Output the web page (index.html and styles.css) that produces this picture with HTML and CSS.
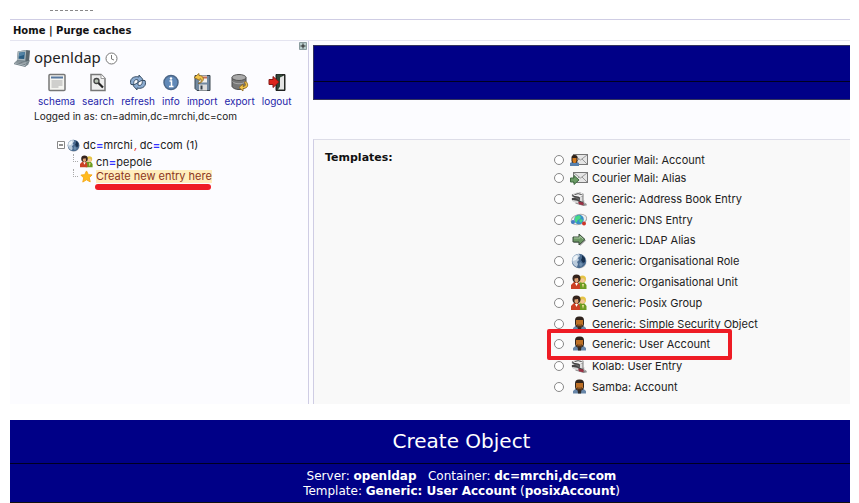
FILE: index.html
```
<!DOCTYPE html>
<html lang="en">

<head>
  <meta charset="UTF-8">
  <meta name="viewport" content="width=device-width, initial-scale=1.0">
  <title>phpLDAPadmin - Create Object</title>
  <link rel="stylesheet" href="styles.css">
</head>

<body>
  <svg class="sprite" aria-hidden="true">
    <symbol id="i-globe" viewBox="0 0 16 16">
      <circle cx="8.600" cy="8.600" r="7" fill="#aaa" opacity=".5"/>
      <circle cx="8" cy="8" r="7.200" fill="#4a6b90"/>
      <path d="M1 7C1 3 5 .8 8 1l1 2-2 2 1 2-2 2 1 2-1 3C3 13 1 10 1 7z" fill="#bacbdc"/>
      <path d="M2.500 4L6 2l1 2-2 3-3 1z" fill="#eef4f8"/>
      <path d="M11 2l3 3v4l-2 1-2-3 1-2z" fill="#17304f"/>
      <path d="M9 9l3 2-2 3-2-2z" fill="#6d8eae"/>
    </symbol>
    <symbol id="i-group" viewBox="0 0 16 16">
      <path d="M7 15V9l3-1h3l2.500 3v4z" fill="#6c9c22"/>
      <circle cx="11.500" cy="5" r="3.500" fill="#e5c447"/>
      <circle cx="11.500" cy="6.500" r="2.300" fill="#f2c697"/>
      <path d="M0 15v-4l3-3h4l2 3v4z" fill="#cc4125"/>
      <path d="M4 9l1.500 3L7 9z" fill="#fff"/>
      <circle cx="5.500" cy="4.500" r="4" fill="#34231c"/>
      <path d="M3.500 4.500L7 4l.5 3-2 2-2-2z" fill="#dda074"/>
      <path d="M11 10l1 4 1-4z" fill="#f4e4a0"/>
    </symbol>
    <symbol id="i-user" viewBox="0 0 16 16">
      <path d="M2 14.500V12l3-2.500h7l3 2.500v2.500z" fill="#6887a9"/>
      <path d="M6.500 10h4l-.5 4.500H7z" fill="#2d2927"/>
      <rect x="4" y=".5" width="9" height="11" rx="4" fill="#30241d"/>
      <path d="M5 4h7v4.500L10 11H7L5 8.500z" fill="#bd7026"/>
      <path d="M6 8.500h5l-1 3H7z" fill="#49301d"/>
      <path d="M7 9h3" stroke="#bd7026"/>
    </symbol>
    <symbol id="i-mail" viewBox="0 0 18 14">
      <rect x="3.500" y="1.500" width="14" height="10" fill="#e5e5e5" stroke="#777"/>
      <path d="M4 2l6.500 5L17 2M4 11l5-5m8 5l-5-5" fill="none" stroke="#999"/>
    </symbol>
    <symbol id="i-mail-user" viewBox="0 0 18 14">
      <use href="#i-mail" width="18" height="14"/>
      <path d="M0 13v-3l2-1h5l2 1v3z" fill="#5680ae"/>
      <rect x="1.500" y="2" width="6" height="8" rx="2.500" fill="#302319"/>
      <path d="M2.500 5h4v3l-1 2h-2l-1-2z" fill="#d47b1f"/>
    </symbol>
    <symbol id="i-mail-alias" viewBox="0 0 18 14">
      <use href="#i-mail" width="18" height="14"/>
      <path d="M.5 7H4V4.500L9 9l-5 4.500V11H.5z" fill="#6b9b66" stroke="#3e6a3f"/>
    </symbol>
    <symbol id="i-arrow" viewBox="0 0 16 16">
      <path d="M3 6h6V3l6 5.500L9 14v-3H3z" fill="#aaa"/>
      <path d="M2 5h6V2l6 5.500L8 13v-3H2z" fill="#6d9865" stroke="#3b4d3b"/>
      <path d="M3 6h6V4l3 3" fill="none" stroke="#a5c49e"/>
    </symbol>
    <symbol id="i-card" viewBox="0 0 18 18">
      <path d="M5 13l5-2 7 3 1 2-4 1-9-3z" fill="#888"/>
      <path d="M1 8l6-1 8 4-1 3-4 1-9-5z" fill="#444"/>
      <path d="M2 10l5 1 5 3-1 1-9-3z" fill="#d5d5d5"/>
      <path d="M1 4l8-3 5 2v9l-4-1-9-5z" fill="#666"/>
      <path d="M2 3.500L8 1l5 1.500v3L10 7 4 6z" fill="#eee"/>
      <path d="M4 4l4-1 4 1M3 6l6 1 1 3" fill="none" stroke="#333"/>
      <path d="M10 7l3-1v6l-3-1z" fill="#ddd"/>
      <path d="M8 12l6 1v3l-5-1z" fill="#9c2f43"/>
      <path d="M14 6v6l2 3" fill="none" stroke="#bbb"/>
    </symbol>
    <symbol id="i-dns" viewBox="0 0 18 16">
      <ellipse cx="9" cy="7.500" rx="8" ry="5" fill="#eee" stroke="#aaa" transform="rotate(-15 9 8)"/>
      <circle cx="9" cy="7.500" r="4.800" fill="#388fc8"/>
      <path d="M5 5l4-2 2 2-1 2-2 1-2 3-1-2zm6 2l2 1-2 3-2-2z" fill="#48d886"/>
      <circle cx="3" cy="10" r="2" fill="#447bc5"/>
      <circle cx="14" cy="11.500" r="2" fill="#cc3528"/>
    </symbol>
    <symbol id="i-computer" viewBox="0 0 18 19">
      <path d="M4 2l9-1.500 4 .5-1 11-4 2-9-1z" fill="#59666d"/>
      <path d="M4 2l9-1.500-1 11.500-9-.5z" fill="#a7b5bc"/>
      <path d="M5.500 3.500l6-1-.7 7.500-6-.2z" fill="#285c82"/>
      <path d="M5.500 3.500l6-1-.3 3-6 2z" fill="#5283a5"/>
      <path d="M3 12l11 1-2 5-12-3z" fill="#c1cbd0" stroke="#718087"/>
      <path d="M2 14l10 2M3 13l10 1.500" stroke="#6b777e"/>
      <path d="M12 18l2-5 3-2-2 5z" fill="#77858c"/>
    </symbol>
    <symbol id="i-clock" viewBox="0 0 13 13">
      <circle cx="6.500" cy="6.500" r="5.500" fill="#fff" stroke="#777"/>
      <path d="M6.500 3v4L9 8" fill="none" stroke="#777"/>
    </symbol>
    <symbol id="i-schema" viewBox="0 0 18 18">
      <rect x="1" y="1" width="16" height="16" rx="1" fill="#f4f4f0" stroke="#777" stroke-width="1.500"/>
      <path d="M3 4h12" stroke="#5879a0" stroke-width="2"/>
      <path d="M3.500 7.500h11m-11 2h11m-11 2h11m-11 2h7" stroke="#aaa"/>
    </symbol>
    <symbol id="i-search" viewBox="0 0 18 18">
      <path d="M2 1h10l4 4v12H2z" fill="#eee" stroke="#777" stroke-width="1.500"/>
      <path d="M12 1v4h4" fill="#fff" stroke="#999"/>
      <circle cx="7.500" cy="7.500" r="2.500" fill="#b7c2b4" stroke="#444" stroke-width="1.300"/>
      <path d="M9.500 9.500L14 14" stroke="#222" stroke-width="2.200"/>
    </symbol>
    <symbol id="i-refresh" viewBox="0 0 18 18">
      <g fill="#8cacd0" stroke="#3b5168" stroke-width="1">
        <path d="M2 11C0 6 4 2 10 3.500V1.500L14 6l-5 3V6.500C6 5 4 8 5 11z"/>
        <path d="M16 7c2 5-2 9-8 7.500v2L4 12l5-3v2.500c3 1.500 5-1.500 4-4.500z"/>
      </g>
    </symbol>
    <symbol id="i-info" viewBox="0 0 18 18">
      <circle cx="9" cy="9" r="7" fill="#6189b8" stroke="#4c6788" stroke-width="1.500"/>
      <path d="M7.500 7.500h2V13M7 13h4.500" fill="none" stroke="#fff" stroke-width="1.500"/>
      <circle cx="9" cy="5" r="1.200" fill="#fff"/>
    </symbol>
    <symbol id="i-import" viewBox="0 0 18 18">
      <path d="M2 2h15v15H4l-2-2z" fill="#7188a0" stroke="#3b4651"/>
      <path d="M6 2h8v7H6z" fill="#f5f2ee"/>
      <path d="M7 4h7" stroke="#c76d53" stroke-width="2"/>
      <path d="M6 11h8v6H6z" fill="#ddd"/>
      <path d="M7.500 12h2v4h-2z" fill="#35414c"/>
      <path d="M5 10C9 9 9 6 7 5v2L1 4l5-4v2c6 0 6 7-1 8z" fill="#f1c44b" stroke="#8a651d" stroke-width=".8"/>
    </symbol>
    <symbol id="i-export" viewBox="0 0 18 18">
      <path d="M1 4v9c2 4 12 4 14 0V4z" fill="#777" stroke="#4b4b4b"/>
      <ellipse cx="8" cy="4" rx="7" ry="3" fill="#aaa" stroke="#555"/>
      <path d="M1.500 8c2 3 11 3 13 0" fill="none" stroke="#aaa"/>
      <path d="M15 8c3 3 2 7-3 7v2.500L8 14l4-3.500V13c3 0 3-3 1-4z" fill="#f1c44b" stroke="#8a651d" stroke-width=".8"/>
    </symbol>
    <symbol id="i-logout" viewBox="0 0 18 18">
      <path d="M8 1h9v16H8z" fill="#263126" stroke="#222"/>
      <path d="M9 1h5v12l-5 4z" fill="#304737"/>
      <path d="M12 4l4-2v14h-6l2-3z" fill="#e4e4e4"/>
      <path d="M1 6h4V3l6 5.500L5 14v-3H1z" fill="#dd261c" stroke="#851b17"/>
    </symbol>
    <symbol id="i-star" viewBox="0 0 14 14">
      <path d="M7 1l2 4 4 .3-3 3 1 4.500-4-2.300L3 13l1-4.500-3-3L5 5z" fill="#ffbb20" stroke="#f5aa18"/>
    </symbol>
    <symbol id="i-minus" viewBox="0 0 8 8">
      <path d="M.5.500h7v7h-7z" fill="#fff" stroke="#888"/>
      <path d="M2 4h4" stroke="#222"/>
    </symbol>
    <symbol id="i-plus" viewBox="0 0 8 8">
      <path d="M.5.500h7v7h-7z" fill="#b8cccc" stroke="#8b9c9e"/>
      <path d="M1.500 4h5M4 1.500v5" stroke="#222"/>
    </symbol>
  </svg>

  <div class="page">
    <header class="top">
      <div class="logo-edge"></div>
      <nav class="menu"><a href="#">Home</a> | <a href="#">Purge caches</a></nav>
    </header>

    <div class="columns">
      <aside class="sidebar">
        <button class="expand" aria-label="Expand panel"><svg><use href="#i-plus"/></svg></button>
        <h1 class="server">
          <svg class="computer"><use href="#i-computer"/></svg>
          <span>openldap</span>
          <svg class="clock"><use href="#i-clock"/></svg>
        </h1>
        <nav class="tools">
          <a href="#"><svg><use href="#i-schema"/></svg>schema</a>
          <a href="#"><svg><use href="#i-search"/></svg>search</a>
          <a href="#"><svg><use href="#i-refresh"/></svg>refresh</a>
          <a href="#"><svg><use href="#i-info"/></svg>info</a>
          <a href="#"><svg><use href="#i-import"/></svg>import</a>
          <a href="#"><svg><use href="#i-export"/></svg>export</a>
          <a href="#"><svg><use href="#i-logout"/></svg>logout</a>
        </nav>
        <p class="logged">Logged in as: cn=admin,dc=mrchi,dc=com</p>

        <div class="tree">
          <div class="node">
            <button class="fold" aria-label="Collapse"><svg><use href="#i-minus"/></svg></button>
            <svg class="node-icon"><use href="#i-globe"/></svg>
            <a href="#">dc<b>=</b>mrchi<i>,</i>dc<b>=</b>com (1)</a>
          </div>
          <ul class="children">
            <li>
              <svg class="node-icon"><use href="#i-group"/></svg>
              <a href="#">cn<b>=</b>pepole</a>
            </li>
            <li>
              <svg class="node-icon"><use href="#i-star"/></svg>
              <a href="#" class="create">Create new entry here</a>
            </li>
          </ul>
        </div>
      </aside>

      <main class="content">
        <div class="banner banner-empty">
          <div class="title"></div>
          <div class="subtitle"></div>
        </div>
        <form class="templates">
          <h2>Templates:</h2>
          <div class="options">
            <label class="mail"><input type="radio" name="template"><svg><use href="#i-mail-user"/></svg>Courier Mail: Account</label>
            <label class="mail"><input type="radio" name="template"><svg><use href="#i-mail-alias"/></svg>Courier Mail: Alias</label>
            <label class="tall"><input type="radio" name="template"><svg><use href="#i-card"/></svg>Generic: Address Book Entry</label>
            <label><input type="radio" name="template"><svg><use href="#i-dns"/></svg>Generic: DNS Entry</label>
            <label><input type="radio" name="template"><svg><use href="#i-arrow"/></svg>Generic: LDAP Alias</label>
            <label class="medium"><input type="radio" name="template"><svg><use href="#i-globe"/></svg>Generic: Organisational Role</label>
            <label><input type="radio" name="template"><svg><use href="#i-group"/></svg>Generic: Organisational Unit</label>
            <label class="medium"><input type="radio" name="template"><svg><use href="#i-group"/></svg>Generic: Posix Group</label>
            <label><input type="radio" name="template"><svg><use href="#i-user"/></svg>Generic: Simple Security Object</label>
            <label class="marked"><input type="radio" name="template"><svg><use href="#i-user"/></svg>Generic: User Account</label>
            <label class="tall"><input type="radio" name="template"><svg><use href="#i-card"/></svg>Kolab: User Entry</label>
            <label><input type="radio" name="template"><svg><use href="#i-user"/></svg>Samba: Account</label>
          </div>
        </form>
      </main>
    </div>

    <section class="banner banner-object">
      <h2 class="title">Create Object</h2>
      <div class="subtitle">
        <p>Server: <b>openldap</b> &nbsp; Container: <b>dc=mrchi,dc=com</b></p>
        <p>Template: <b>Generic: User Account</b> (<b>posixAccount</b>)</p>
      </div>
    </section>
  </div>
</body>

</html>
```
FILE: styles.css
```
*,
*::before,
*::after {
  margin: 0;
  padding: 0;
  box-sizing: border-box;
}

body {
  font-family: "DejaVu Sans", Verdana, sans-serif;
  font-size: 11px;
  color: #222;
  background: #fff;
}

a {
  color: inherit;
  text-decoration: none;
}

button {
  border: none;
  background: none;
  display: flex;
}

svg {
  flex: none;
}

.sprite {
  display: none;
}

.page {
  padding: 10px 9px 0 10px;
}

.logo-edge {
  width: 43px;
  height: 9px;
  margin-left: 40px;
  border-top: 1px dashed #888;
}

.menu {
  height: 22px;
  padding-left: 3px;
  line-height: 21px;
  font-size: 10px;
  font-weight: bold;
  color: #111;
  border-top: 1px solid #cfcde4;
  border-bottom: 1px solid #e4e4f0;
}

.columns {
  display: flex;
  background: #fcfcff;
}

.sidebar {
  position: relative;
  flex: 0 0 35.600%;
  padding: 7px 0 0 4px;
  font-family: Inter, sans-serif;
  border-right: 1px solid #cfcde4;
}

.expand {
  position: absolute;
  top: 1px;
  right: 1px;
}

.expand svg {
  width: 8px;
  height: 8px;
}

.server {
  display: flex;
  align-items: center;
  height: 20px;
  font-family: "Noto Sans", sans-serif;
  font-size: 15px;
  font-weight: normal;
}

.server span {
  line-height: 16px;
  padding-bottom: 2px;
}

.computer {
  width: 17px;
  height: 19px;
  margin-right: 3px;
}

.clock {
  width: 13px;
  height: 13px;
  margin-left: 4px;
}

.tools {
  display: flex;
  gap: 7px;
  padding: 5px 0 0 24px;
  font-size: 10px;
  line-height: 18px;
  color: #2525a8;
}

.tools a {
  display: flex;
  flex-direction: column;
  align-items: center;
}

.tools svg {
  width: 18px;
  height: 19px;
}

.logged {
  padding-left: 20px;
  line-height: 12px;
  font-size: 10px;
}

.tree {
  padding: 14px 0 0 43px;
}

.tree b {
  color: #33f;
}

.tree i {
  margin: 0 2px;
  color: #e22;
}

.node,
.children li {
  display: flex;
  align-items: center;
  height: 18px;
}

.fold svg {
  width: 8px;
  height: 8px;
}

.node-icon {
  width: 13px;
  height: 13px;
  margin: 0 3px 0 2px;
}

.children {
  list-style: none;
  margin-left: 16px;
}

.children li {
  height: 15px;
}

.children li::before {
  content: "";
  align-self: flex-start;
  width: 5px;
  height: 8px;
  border-left: 1px dotted #aaa;
  border-bottom: 1px dotted #aaa;
}

.create {
  position: relative;
  line-height: 13px;
  color: #8c3520;
  background: #ffedbd;
}

.create::after {
  content: "";
  position: absolute;
  top: 14px;
  left: -1px;
  width: 100%;
  height: 6px;
  border-radius: 3px;
  background: #ee1c25;
}

.content {
  flex: 1;
  padding: 4px 0 0 4px;
}

.banner {
  color: #fff;
  background: #000087;
  text-align: center;
}

.banner-empty {
  margin-bottom: 39px;
  border: 1px solid #33335c;
  border-right: none;
}

.banner-empty .title {
  height: 35px;
}

.banner-empty .subtitle {
  height: 18px;
}

.subtitle {
  border-top: 1px solid #000020;
}

.templates {
  display: grid;
  grid-template-columns: 228px 1fr;
  padding: 11px 0 7px 11px;
  background: #f9f9f9;
  border-top: 1px solid #dddde8;
  border-left: 1px solid #cfcde4;
}

.templates h2 {
  font-size: 11px;
  line-height: 13px;
  color: #111;
}

.options {
  font-family: Inter, sans-serif;
}

.options label {
  position: relative;
  display: flex;
  align-items: center;
  height: 20px;
}

.options .mail {
  height: 18px;
}

.options .medium {
  height: 22px;
}

.options .tall {
  height: 23px;
}

.options input {
  appearance: none;
  width: 10px;
  height: 10px;
  margin: 0 6px 0 1px;
  border: 1px solid #888;
  border-radius: 50%;
  background: #fff;
}

.options svg {
  width: 18px;
  height: 16px;
  margin-right: 4px;
}

.options .marked::after {
  content: "";
  position: absolute;
  z-index: 1;
  top: -5px;
  left: -6px;
  width: 185px;
  height: 31px;
  border: 4px solid #ee1c25;
  border-radius: 2px;
}

.banner-object {
  margin-top: 16px;
  padding-left: 63px;
  border-bottom: 1px solid #111;
}

.banner-object .title {
  font-size: 20px;
  font-weight: normal;
  line-height: 43px;
}

.banner-object .subtitle {
  margin-left: -63px;
  padding: 5px 0 3px 63px;
  font-size: 12px;
  line-height: 15px;
}
```
